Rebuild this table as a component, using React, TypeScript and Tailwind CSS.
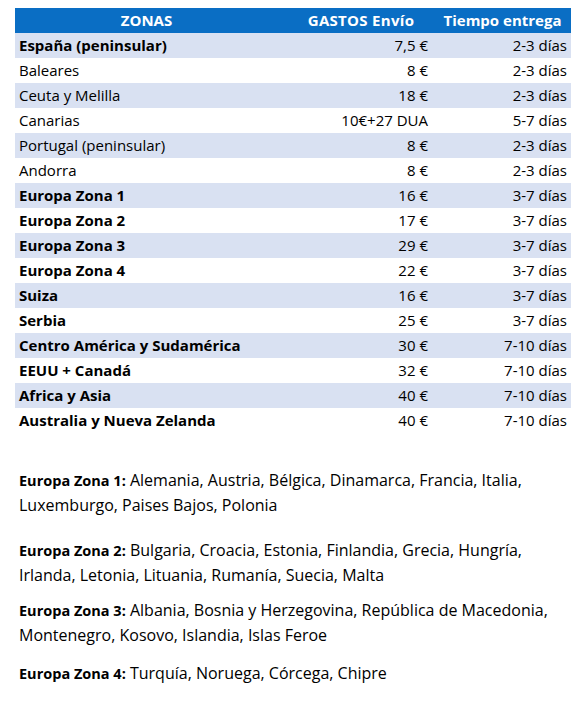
const rows = [
  { zona: "España (peninsular)", gastos: "7,5 €", tiempo: "2-3 días", bold: true },
  { zona: "Baleares", gastos: "8 €", tiempo: "2-3 días" },
  { zona: "Ceuta y Melilla", gastos: "18 €", tiempo: "2-3 días" },
  { zona: "Canarias", gastos: "10€+27 DUA", tiempo: "5-7 días" },
  { zona: "Portugal (peninsular)", gastos: "8 €", tiempo: "2-3 días" },
  { zona: "Andorra", gastos: "8 €", tiempo: "2-3 días" },
  { zona: "Europa Zona 1", gastos: "16 €", tiempo: "3-7 días", bold: true },
  { zona: "Europa Zona 2", gastos: "17 €", tiempo: "3-7 días", bold: true },
  { zona: "Europa Zona 3", gastos: "29 €", tiempo: "3-7 días", bold: true },
  { zona: "Europa Zona 4", gastos: "22 €", tiempo: "3-7 días", bold: true },
  { zona: "Suiza", gastos: "16 €", tiempo: "3-7 días", bold: true },
  { zona: "Serbia", gastos: "25 €", tiempo: "3-7 días", bold: true },
  { zona: "Centro América y Sudamérica", gastos: "30 €", tiempo: "7-10 días", bold: true },
  { zona: "EEUU + Canadá", gastos: "32 €", tiempo: "7-10 días", bold: true },
  { zona: "Africa y Asia", gastos: "40 €", tiempo: "7-10 días", bold: true },
  { zona: "Australia y Nueva Zelanda", gastos: "40 €", tiempo: "7-10 días", bold: true },
];

const notes = [
  {
    title: "Europa Zona 1:",
    lines: ["Alemania, Austria, Bélgica, Dinamarca, Francia, Italia,", "Luxemburgo, Paises Bajos, Polonia"],
    mt: "mt-[35px]",
  },
  {
    title: "Europa Zona 2:",
    lines: ["Bulgaria, Croacia, Estonia, Finlandia, Grecia, Hungría,", "Irlanda, Letonia, Lituania, Rumanía, Suecia, Malta"],
    mt: "mt-[20px]",
  },
  {
    title: "Europa Zona 3:",
    lines: ["Albania, Bosnia y Herzegovina, República de Macedonia,", "Montenegro, Kosovo, Islandia, Islas Feroe"],
    mt: "mt-[10px]",
  },
  {
    title: "Europa Zona 4:",
    lines: ["Turquía, Noruega, Córcega, Chipre"],
    mt: "mt-[13px]",
  },
];

export default function App() {
  return (
    <div className="min-h-[701px] w-[585px] bg-white pt-[8px] font-['Open_Sans','Liberation_Sans',sans-serif] text-[15px] text-black">
      <div className="ml-[15px] w-[556px]">
        <div className="flex h-[25px] items-center bg-[#0a6ec4] font-bold text-white">
          <div className="w-[263px] text-center">ZONAS</div>
          <div className="w-[160px] pl-[6px] text-center tracking-[0.3px]">GASTOS Envío</div>
          <div className="w-[133px] pr-[4px] text-center">Tiempo entrega</div>
        </div>
        {rows.map((row, i) => (
          <div
            key={row.zona}
            className={`flex h-[25px] items-center ${i % 2 === 0 ? "bg-[#d9e1f2]" : "bg-white"}`}
          >
            <div className={`w-[263px] pl-[4px] ${row.bold ? "font-bold" : ""}`}>{row.zona}</div>
            <div className="w-[160px] pr-[10px] text-right">{row.gastos}</div>
            <div className="w-[133px] pr-[4px] text-right">{row.tiempo}</div>
          </div>
        ))}
      </div>

      <div className="pl-[19px] text-[16px]">
        {notes.map((note) => (
          <p key={note.title} className={`${note.mt} leading-[25px]`}>
            <span className="text-[14.5px] font-bold">{note.title}</span> {note.lines[0]}
            {note.lines[1] && (
              <>
                <br />
                {note.lines[1]}
              </>
            )}
          </p>
        ))}
      </div>
    </div>
  );
}
